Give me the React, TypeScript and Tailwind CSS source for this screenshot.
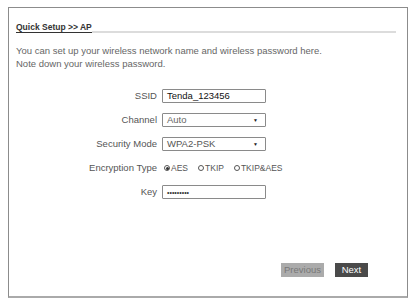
import React from "react";

const font = { fontFamily: '"Liberation Sans", Arial, sans-serif' };

function Row({ label, children }: { label: string; children: React.ReactNode }) {
  return (
    <div className="flex h-[14px] items-center">
      <div className="w-[146px] pr-[5px] text-right text-[9.5px] leading-[14px] text-[#555]">{label}</div>
      {children}
    </div>
  );
}

function Box({ children, select }: { children: React.ReactNode; select?: boolean }) {
  return (
    <div className="flex h-[14px] w-[104px] items-center justify-between rounded-[1px] border border-[#8a8a8a] bg-white pl-[4px] pr-[7px]">
      {children}
      {select && <span className="text-[5px] leading-none text-[#222]">▼</span>}
    </div>
  );
}

function Radio({ checked, label }: { checked?: boolean; label: string }) {
  return (
    <div className="flex items-center gap-[1px]">
      <span className="flex h-[6px] w-[6px] items-center justify-center rounded-full border border-[#555]">
        {checked && <span className="h-[3px] w-[3px] rounded-full bg-[#333]" />}
      </span>
      <span className="text-[8.5px] leading-none text-[#555]">{label}</span>
    </div>
  );
}

export default function App() {
  return (
    <div className="h-[306px] w-[413px] bg-white pl-[8px] pt-[7px]" style={font}>
      <div className="flex h-[291px] w-[400px] flex-col border border-b-2 border-[#8c8c8c] border-b-[#aaa] px-[7px] pt-[14px] pb-[19px]">
        <div className="flex items-end pr-[4px]">
          <span className="border-b border-[#333] text-[8.5px] font-bold leading-[10px] text-[#333]">Quick Setup &gt;&gt; AP</span>
          <div className="flex-1 border-b-2 border-[#dcdcdc]" />
        </div>
        <div className="mt-[11px] text-[9.5px] leading-[13px] text-[#666]">
          <div>You can set up your wireless network name and wireless password here.</div>
          <div>Note down your wireless password.</div>
        </div>
        <div className="mt-[19px] flex flex-col gap-[10px]">
          <Row label="SSID">
            <Box>
              <span className="text-[9.5px] leading-none text-[#111]">Tenda_123456</span>
            </Box>
          </Row>
          <Row label="Channel">
            <Box select>
              <span className="text-[9.5px] leading-none text-[#666]">Auto</span>
            </Box>
          </Row>
          <Row label="Security Mode">
            <Box select>
              <span className="text-[9.5px] leading-none text-[#555]">WPA2-PSK</span>
            </Box>
          </Row>
          <Row label="Encryption Type">
            <div className="flex items-center gap-[10px] pl-[2px]">
              <Radio checked label="AES" />
              <Radio label="TKIP" />
              <Radio label="TKIP&AES" />
            </div>
          </Row>
          <Row label="Key">
            <Box>
              <span className="text-[7px] leading-none text-[#333]">•••••••••</span>
            </Box>
          </Row>
        </div>
        <div className="flex-1" />
        <div className="flex justify-end gap-[11px] pr-[32px]">
          <button className="h-[14px] w-[43px] bg-[#ababab] text-[9.5px] leading-[14px] text-[#787878]">Previous</button>
          <button className="h-[14px] w-[33px] bg-[#4a4a4a] text-[9.5px] leading-[14px] text-white">Next</button>
        </div>
      </div>
    </div>
  );
}
